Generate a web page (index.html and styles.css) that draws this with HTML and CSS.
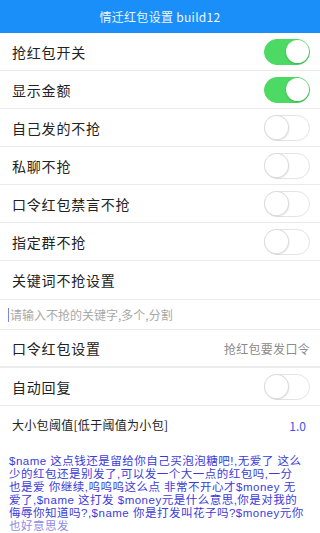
FILE: index.html
```html
<!DOCTYPE html>
<html lang="zh">
<head>
<meta charset="utf-8">
<title>情迁红包设置</title>
<link rel="stylesheet" href="styles.css">
</head>
<body>
<header class="bar">情迁红包设置 build12</header>
<main class="list">
  <div class="row"><span class="label">抢红包开关</span><span class="switch on"></span></div>
  <div class="row"><span class="label">显示金额</span><span class="switch on"></span></div>
  <div class="row"><span class="label">自己发的不抢</span><span class="switch"></span></div>
  <div class="row"><span class="label">私聊不抢</span><span class="switch"></span></div>
  <div class="row"><span class="label">口令红包禁言不抢</span><span class="switch"></span></div>
  <div class="row"><span class="label">指定群不抢</span><span class="switch"></span></div>
  <div class="row tall"><span class="label">关键词不抢设置</span></div>
  <div class="row input-row"><span class="caret"></span><span class="placeholder">请输入不抢的关键字,多个,分割</span></div>
  <div class="row thick"><span class="label">口令红包设置</span><span class="hint">抢红包要发口令</span></div>
  <div class="row"><span class="label">自动回复</span><span class="switch"></span></div>
  <div class="row plain"><span class="label small">大小包阈值[低于阈值为小包]</span><span class="value">1.0</span></div>
  <div class="reply">
    <span class="line">$name 这点钱还是留给你自己买泡泡糖吧!,无爱了 这么</span>
    <span class="line">少的红包还是别发了,可以发一个大一点的红包吗,一分</span>
    <span class="line">也是爱 你继续,呜呜呜这么点 非常不开心才$money 无</span>
    <span class="line">爱了,$name 这打发 $money元是什么意思,你是对我的</span>
    <span class="line">侮辱你知道吗?,$name 你是打发叫花子吗?$money元你</span>
    <span class="line fade">也好意思发</span>
  </div>
</main>
</body>
</html>
```

FILE: styles.css
```css
* { box-sizing: border-box; }
html, body { margin: 0; padding: 0; background: #fff; }
body {
  width: 320px;
  height: 533px;
  overflow: hidden;
  font-family: "Noto Sans CJK SC", "Noto Sans", sans-serif;
  color: #222;
}
.bar {
  height: 33px;
  background: #1b8ff9;
  color: #eef6ff;
  font-size: 12px;
  display: flex;
  align-items: center;
  justify-content: center;
  letter-spacing: 0.3px;
}
.list { display: flex; flex-direction: column; }
.row {
  height: 38px;
  border-bottom: 1px solid #e9e9e9;
  display: flex;
  align-items: center;
  justify-content: space-between;
  padding: 0 10px 0 12px;
}
.row.tall { height: 39px; }
.row.input-row {
  height: 30px;
  justify-content: flex-start;
  padding-left: 8px;
}
.row.thick { height: 38px; border-bottom: 2px solid #ececec; }
.row.plain { border-bottom: none; height: 38px; padding-right: 14px; }
.label {
  font-size: 14px;
  letter-spacing: 0.8px;
  line-height: 1;
}
.label.small { font-size: 12px; letter-spacing: 0.3px; }
.switch {
  position: relative;
  width: 46px;
  height: 26px;
  border-radius: 13px;
  background: #fff;
  border: 1.5px solid #e4e4e4;
  flex: none;
}
.switch::after {
  content: "";
  position: absolute;
  top: 0;
  left: 0;
  width: 23px;
  height: 23px;
  border-radius: 50%;
  background: #fff;
  box-shadow: 0 0 0 1px #dcdcdc, 1px 1px 2px rgba(0,0,0,0.15);
}
.switch.on {
  background: #4cd964;
  border-color: #4cd964;
}
.switch.on::after {
  left: auto;
  right: 0;
  box-shadow: 0 1px 2px rgba(0,0,0,0.2);
}
.caret {
  width: 1px;
  height: 14px;
  background: #7a86e8;
  margin-right: 1px;
}
.placeholder {
  font-size: 12px;
  color: #a8a8a8;
}
.hint {
  font-size: 12px;
  color: #8a8a8a;
  letter-spacing: 0.3px;
}
.value {
  font-size: 12px;
  color: #3f55f0;
}
.reply {
  display: flex;
  flex-direction: column;
  padding: 11px 0 0 9px;
  color: #3b3bdc;
  font-family: "Liberation Sans", "Noto Sans CJK SC", sans-serif;
  font-size: 11.5px;
  line-height: 13px;
  letter-spacing: 0.5px;
}
.line { white-space: nowrap; height: 13px; }
.fade { color: #8d8de8; }
```
